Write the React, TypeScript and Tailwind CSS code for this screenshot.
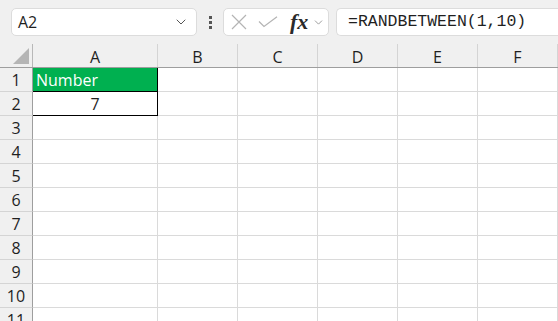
import { ChevronDown } from "lucide-react";

const columns = [
  { label: "A", width: "w-[125px]" },
  { label: "B", width: "w-[80px]" },
  { label: "C", width: "w-[80px]" },
  { label: "D", width: "w-[80px]" },
  { label: "E", width: "w-[80px]" },
  { label: "F", width: "w-[80px]" },
];

const rows = [1, 2, 3, 4, 5, 6, 7, 8, 9, 10, 11];

function FormulaBar() {
  return (
    <div className="flex h-[44px] items-center bg-[#f0f0f0] pl-[11px]">
      <div className="flex h-[28px] w-[186px] items-center justify-between rounded-[5px] border border-[#dcdcdc] bg-white pl-[6px] pr-[7px]">
        <span className="text-[16px] text-[#1f1f1f]">A2</span>
        <ChevronDown size={16} strokeWidth={1.5} className="text-[#555]" />
      </div>
      <div className="flex w-[26px] flex-col items-center gap-[2px]">
        <span className="h-[3px] w-[3px] bg-[#555]" />
        <span className="h-[3px] w-[3px] bg-[#555]" />
        <span className="h-[3px] w-[3px] bg-[#555]" />
      </div>
      <div className="flex h-[28px] w-[106px] items-center rounded-[5px] border border-[#dcdcdc] bg-white pl-[7px]">
        <svg width="16" height="16" viewBox="0 0 16 16" className="text-[#b4b4b4]">
          <path d="M1 1L15 15M15 1L1 15" stroke="currentColor" strokeWidth="1.2" fill="none" />
        </svg>
        <svg width="20" height="12" viewBox="0 0 20 12" className="ml-[11px] text-[#b4b4b4]">
          <path d="M1 5.5L6 10.5L19 0.8" stroke="currentColor" strokeWidth="1.2" fill="none" />
        </svg>
        <span className="ml-[12px] font-['Liberation_Serif',serif] text-[22px] font-bold italic leading-none text-[#2a2a2a]">
          fx
        </span>
        <ChevronDown size={13} strokeWidth={1.5} className="ml-[4px] text-[#888]" />
      </div>
      <div className="ml-[7px] flex h-[28px] flex-1 items-center rounded-l-[5px] border border-r-0 border-[#dcdcdc] bg-white pl-[11px]">
        <span className="font-['Liberation_Mono',monospace] text-[16.5px] text-[#1f1f1f]">
          =RANDBETWEEN(1,10)
        </span>
      </div>
    </div>
  );
}

function HeaderRow() {
  return (
    <div className="flex h-[24px] border-b border-[#9e9e9e] bg-[#f0f0f0]">
      <div className="relative w-[33px] border-r border-[#b8b8b8]">
        <span className="absolute bottom-[3px] right-[3px] h-0 w-0 border-b-[16px] border-l-[16px] border-b-[#b5b5b5] border-l-transparent" />
      </div>
      {columns.map((col) => (
        <div
          key={col.label}
          className={`${col.width} flex items-center justify-center border-r border-[#d4d4d4] pt-[2px] text-[16px] text-[#1f1f1f]`}
        >
          {col.label}
        </div>
      ))}
    </div>
  );
}

function Cell({ row, col }: { row: number; col: number }) {
  const width = columns[col].width;
  if (col === 0 && row === 1) {
    return (
      <div className={`${width} flex items-center border-b border-r border-b-black border-r-black bg-[#00b050] pl-[3px] text-[16px] text-white`}>
        Number
      </div>
    );
  }
  if (col === 0 && row === 2) {
    return (
      <div className={`${width} flex items-center justify-center border-b border-r border-black bg-white text-[16px] text-[#1f1f1f]`}>
        7
      </div>
    );
  }
  return <div className={`${width} border-b border-r border-[#dadada] bg-white`} />;
}

export default function App() {
  return (
    <div className="h-[321px] w-[558px] overflow-hidden bg-white font-['Open_Sans','Liberation_Sans',sans-serif]">
      <FormulaBar />
      <HeaderRow />
      {rows.map((row) => (
        <div key={row} className="flex h-[24px]">
          <div className="flex w-[33px] items-center justify-center border-b border-r border-b-[#d4d4d4] border-r-[#9e9e9e] bg-[#f0f0f0] text-[16px] text-[#1f1f1f]">
            {row}
          </div>
          {columns.map((c, i) => (
            <Cell key={c.label} row={row} col={i} />
          ))}
        </div>
      ))}
    </div>
  );
}
